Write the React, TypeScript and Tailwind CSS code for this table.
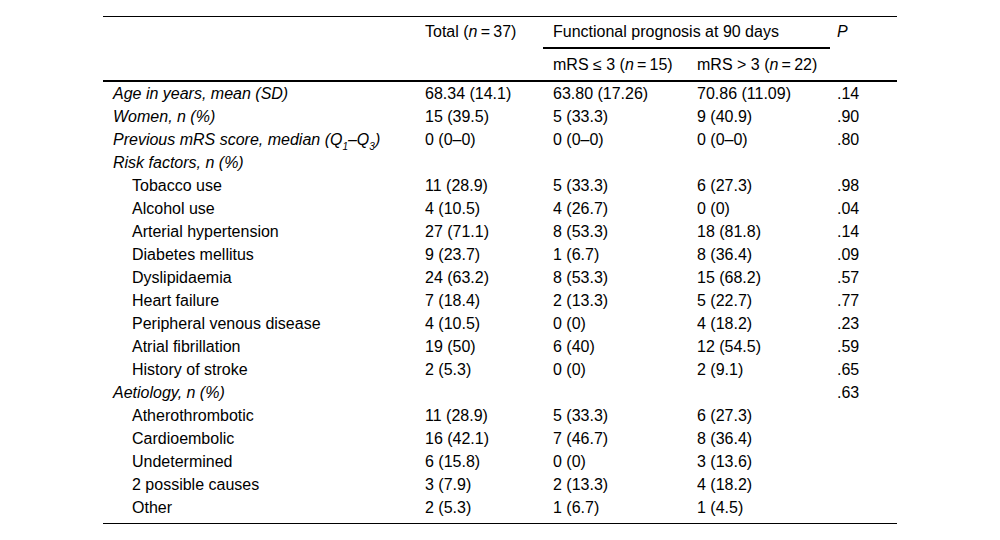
import React from "react";

const thin = "\u2009";

type Row = {
  label: React.ReactNode;
  italic?: boolean;
  indent?: boolean;
  total?: string;
  a?: string;
  b?: string;
  p?: string;
};

const rows: Row[] = [
  { label: "Age in years, mean (SD)", italic: true, total: "68.34 (14.1)", a: "63.80 (17.26)", b: "70.86 (11.09)", p: ".14" },
  { label: "Women, n (%)", italic: true, total: "15 (39.5)", a: "5 (33.3)", b: "9 (40.9)", p: ".90" },
  {
    label: (
      <>
        Previous mRS score, median (Q<sub className="text-[10px] relative top-[1px] align-sub leading-none">1</sub>–Q
        <sub className="text-[10px] relative top-[1px] align-sub leading-none">3</sub>)
      </>
    ),
    italic: true,
    total: "0 (0–0)",
    a: "0 (0–0)",
    b: "0 (0–0)",
    p: ".80",
  },
  { label: "Risk factors, n (%)", italic: true },
  { label: "Tobacco use", indent: true, total: "11 (28.9)", a: "5 (33.3)", b: "6 (27.3)", p: ".98" },
  { label: "Alcohol use", indent: true, total: "4 (10.5)", a: "4 (26.7)", b: "0 (0)", p: ".04" },
  { label: "Arterial hypertension", indent: true, total: "27 (71.1)", a: "8 (53.3)", b: "18 (81.8)", p: ".14" },
  { label: "Diabetes mellitus", indent: true, total: "9 (23.7)", a: "1 (6.7)", b: "8 (36.4)", p: ".09" },
  { label: "Dyslipidaemia", indent: true, total: "24 (63.2)", a: "8 (53.3)", b: "15 (68.2)", p: ".57" },
  { label: "Heart failure", indent: true, total: "7 (18.4)", a: "2 (13.3)", b: "5 (22.7)", p: ".77" },
  { label: "Peripheral venous disease", indent: true, total: "4 (10.5)", a: "0 (0)", b: "4 (18.2)", p: ".23" },
  { label: "Atrial fibrillation", indent: true, total: "19 (50)", a: "6 (40)", b: "12 (54.5)", p: ".59" },
  { label: "History of stroke", indent: true, total: "2 (5.3)", a: "0 (0)", b: "2 (9.1)", p: ".65" },
  { label: "Aetiology, n (%)", italic: true, p: ".63" },
  { label: "Atherothrombotic", indent: true, total: "11 (28.9)", a: "5 (33.3)", b: "6 (27.3)" },
  { label: "Cardioembolic", indent: true, total: "16 (42.1)", a: "7 (46.7)", b: "8 (36.4)" },
  { label: "Undetermined", indent: true, total: "6 (15.8)", a: "0 (0)", b: "3 (13.6)" },
  { label: "2 possible causes", indent: true, total: "3 (7.9)", a: "2 (13.3)", b: "4 (18.2)" },
  { label: "Other", indent: true, total: "2 (5.3)", a: "1 (6.7)", b: "1 (4.5)" },
];

const cols = "grid grid-cols-[312px_128px_144px_143px_67px]";

export default function App() {
  return (
    <div
      className="w-[1000px] h-[540px] bg-white text-black text-[16px] overflow-hidden"
      style={{ fontFamily: '"Liberation Sans", Arial, sans-serif' }}
    >
      <div className="ml-[103px] w-[794px] mt-4 border-t border-black">
        {/* Header */}
        <div className={`${cols} grid-rows-[32px_31px] border-b-2 border-black`}>
          <div className="row-span-2" />
          <div className="row-span-2 pl-[10px] h-[30px] leading-[30px] whitespace-nowrap">
            Total (<i>n</i>
            {thin}={thin}37)
          </div>
          <div className="col-span-2 pl-[10px] h-[32px] leading-[30px] border-b-2 border-black whitespace-nowrap">
            Functional prognosis at 90 days
          </div>
          <div className="row-span-2 pl-[7px] h-[30px] leading-[30px]">
            <i>P</i>
          </div>
          <div className="col-start-3 row-start-2 pl-[10px] leading-[31px] whitespace-nowrap">
            mRS ≤ 3 (<i>n</i>
            {thin}={thin}15)
          </div>
          <div className="col-start-4 row-start-2 pl-[10px] leading-[31px] whitespace-nowrap">
            mRS &gt; 3 (<i>n</i>
            {thin}={thin}22)
          </div>
        </div>

        {/* Body */}
        <div className="pb-1 border-b border-black">
          {rows.map((r, i) => (
            <div key={i} className={`${cols} h-[23px] leading-[23px]`}>
              <div className={`${r.indent ? "pl-[29px]" : "pl-[10px]"} ${r.italic ? "italic" : ""} whitespace-nowrap`}>
                {r.label}
              </div>
              <div className="pl-[10px] whitespace-nowrap">{r.total ?? ""}</div>
              <div className="pl-[10px] whitespace-nowrap">{r.a ?? ""}</div>
              <div className="pl-[10px] whitespace-nowrap">{r.b ?? ""}</div>
              <div className="pl-[7px] whitespace-nowrap">{r.p ?? ""}</div>
            </div>
          ))}
        </div>
      </div>
    </div>
  );
}
